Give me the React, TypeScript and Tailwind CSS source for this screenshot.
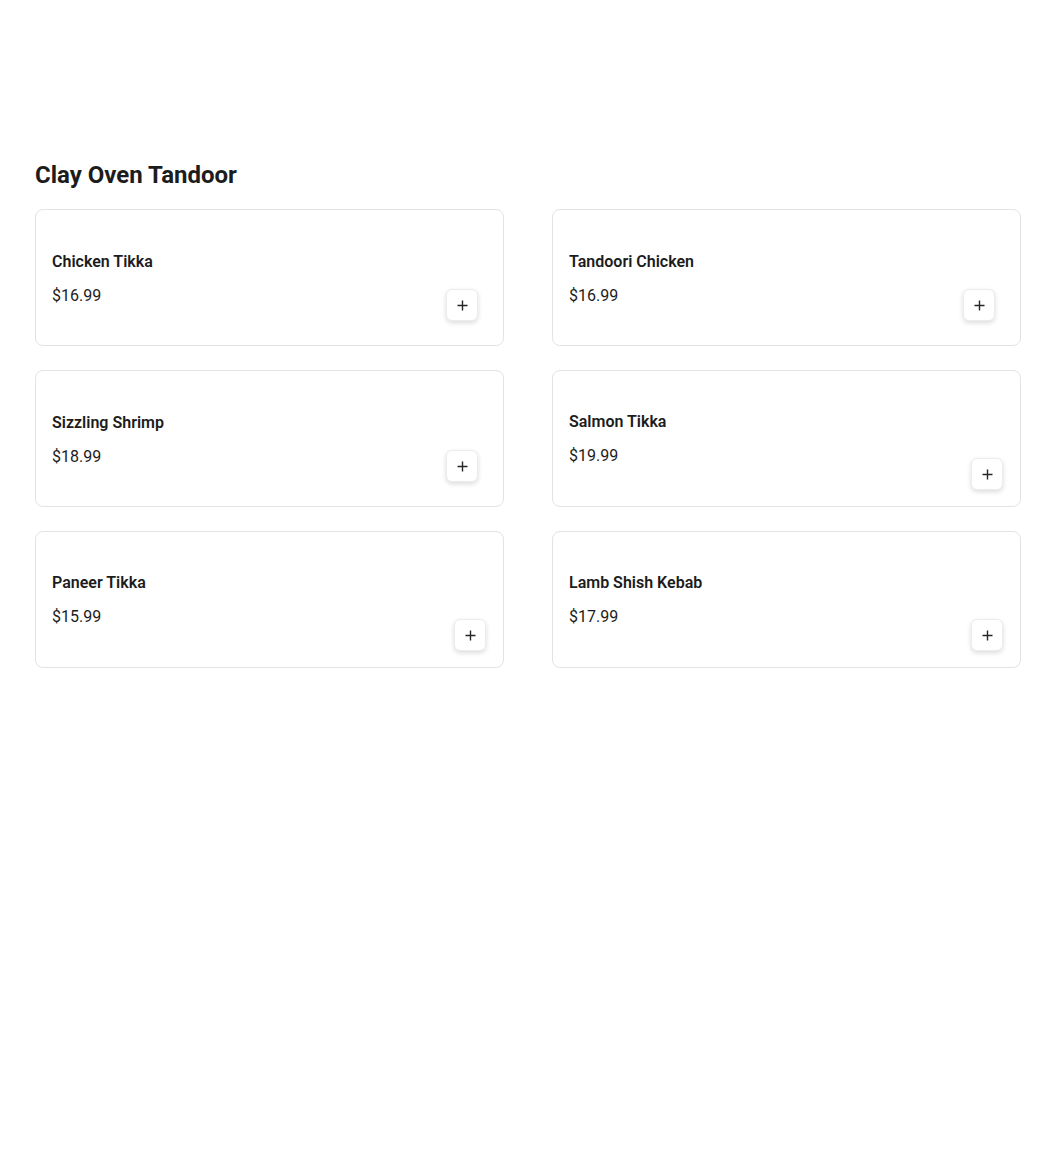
const items = [
  { name: "Chicken Tikka", price: "$16.99", shifted: false },
  { name: "Tandoori Chicken", price: "$16.99", shifted: false },
  { name: "Sizzling Shrimp", price: "$18.99", shifted: false },
  { name: "Salmon Tikka", price: "$19.99", shifted: true },
  { name: "Paneer Tikka", price: "$15.99", shifted: true },
  { name: "Lamb Shish Kebab", price: "$17.99", shifted: true },
];

function PlusIcon() {
  return (
    <svg width="11" height="11" viewBox="0 0 11 11" fill="none" stroke="#262626" strokeWidth="1.4">
      <path d="M5.5 0.5v10M0.5 5.5h10" />
    </svg>
  );
}

function MenuCard({ name, price, shifted }: { name: string; price: string; shifted: boolean }) {
  return (
    <div className="flex h-[137px] items-start justify-between rounded-lg border border-[#e3e3e3] bg-white p-4">
      <div className={shifted ? "pt-[23px]" : "pt-[24px]"}>
        <div className="text-base leading-6 font-semibold text-[#1c1c1c]">{name}</div>
        <div className="mt-[10px] text-base leading-6 text-[#1c1c1c]">{price}</div>
      </div>
      <button
        className={
          "flex h-8 w-8 items-center justify-center rounded-md border border-[#ececec] bg-white shadow-[0_2px_5px_rgba(0,0,0,0.14)] " +
          (shifted ? "mt-[71px] mr-[1px]" : "mt-[63px] mr-[9px]")
        }
      >
        <PlusIcon />
      </button>
    </div>
  );
}

export default function App() {
  return (
    <div className="min-h-[1158px] bg-white px-[35px] pt-[159px]" style={{ fontFamily: "Roboto, 'Liberation Sans', sans-serif" }}>
      <h2 className="text-2xl leading-8 font-bold text-[#1c1c1c]">Clay Oven Tandoor</h2>
      <div className="mt-[18px] grid w-[986px] grid-cols-2 gap-x-12 gap-y-6">
        {items.map((it) => (
          <MenuCard key={it.name} {...it} />
        ))}
      </div>
    </div>
  );
}
